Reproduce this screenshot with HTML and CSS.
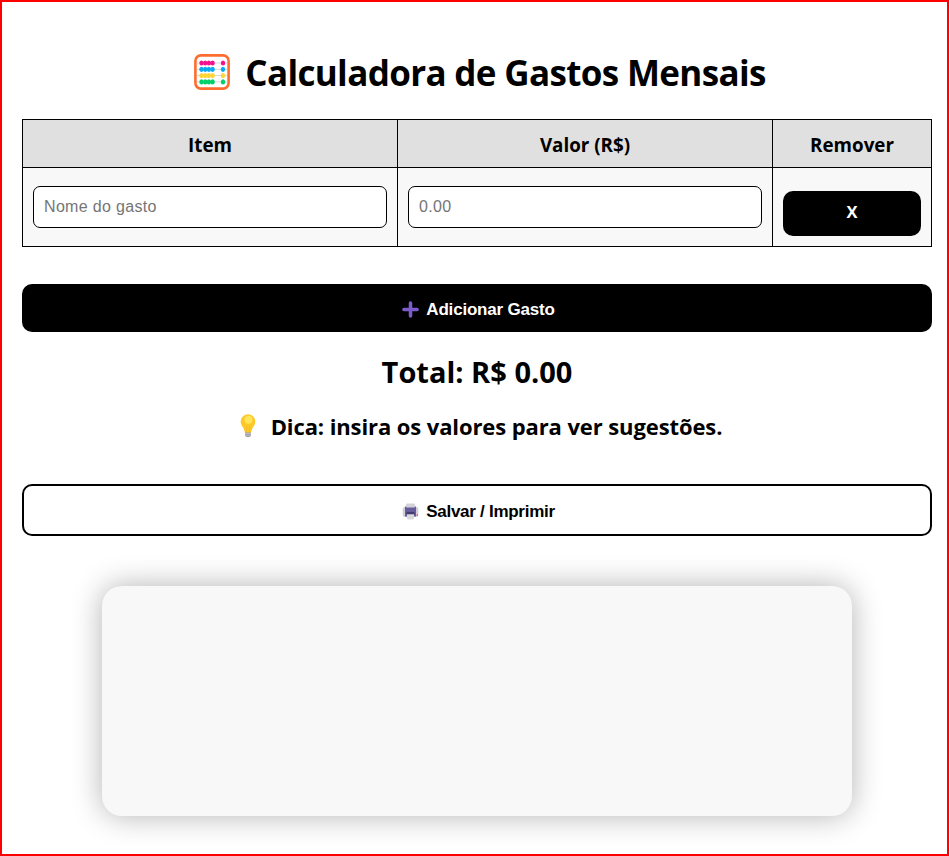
FILE: index.html
```html
<!DOCTYPE html>
<html lang="pt-BR">
<head>
<meta charset="UTF-8">
<title>Calculadora de Gastos Mensais</title>
<link rel="stylesheet" href="styles.css">
</head>
<body>
<main class="page">
  <h1 class="title">
    <svg class="abacus" viewBox="0 0 36 36" aria-hidden="true">
      <rect x="1.4" y="1.4" width="33.2" height="33.2" rx="5.5" fill="#fff" stroke="#ff6d2e" stroke-width="2.6"/>
      <path d="M3 9h30M3 15.3h30M3 21.6h30M3 27.9h30" stroke="#d5d5d5" stroke-width="1"/>
      <g fill="#f3128d"><ellipse cx="7.5" cy="9" rx="2.2" ry="2.6"/><ellipse cx="11.2" cy="9" rx="2.2" ry="2.6"/><ellipse cx="14.9" cy="9" rx="2.2" ry="2.6"/><ellipse cx="18.6" cy="9" rx="2.2" ry="2.6"/><ellipse cx="29" cy="9" rx="2.2" ry="2.6"/></g>
      <g fill="#08a8f4"><ellipse cx="7.5" cy="15.3" rx="2.2" ry="2.6"/><ellipse cx="11.2" cy="15.3" rx="2.2" ry="2.6"/><ellipse cx="14.9" cy="15.3" rx="2.2" ry="2.6"/><ellipse cx="18.6" cy="15.3" rx="2.2" ry="2.6"/><ellipse cx="29" cy="15.3" rx="2.2" ry="2.6"/></g>
      <g fill="#fdd535"><ellipse cx="7.5" cy="21.6" rx="2.2" ry="2.6"/><ellipse cx="11.2" cy="21.6" rx="2.2" ry="2.6"/><ellipse cx="14.9" cy="21.6" rx="2.2" ry="2.6"/><ellipse cx="18.6" cy="21.6" rx="2.2" ry="2.6"/><ellipse cx="29" cy="21.6" rx="2.2" ry="2.6"/></g>
      <g fill="#00cf6b"><ellipse cx="7.5" cy="27.9" rx="2.2" ry="2.6"/><ellipse cx="11.2" cy="27.9" rx="2.2" ry="2.6"/><ellipse cx="14.9" cy="27.9" rx="2.2" ry="2.6"/><ellipse cx="18.6" cy="27.9" rx="2.2" ry="2.6"/><ellipse cx="29" cy="27.9" rx="2.2" ry="2.6"/></g>
    </svg>
    <span class="title-text">Calculadora de Gastos Mensais</span>
  </h1>
  <table class="expenses">
    <thead>
      <tr><th class="col-field">Item</th><th class="col-field">Valor (R$)</th><th>Remover</th></tr>
    </thead>
    <tbody>
      <tr>
        <td><input class="field" type="text" placeholder="Nome do gasto"></td>
        <td><input class="field" type="text" placeholder="0.00"></td>
        <td><button class="remove">X</button></td>
      </tr>
    </tbody>
  </table>
  <button class="action add">
    <svg class="plus" viewBox="0 0 17 17" aria-hidden="true"><path d="M8.5 1.900v13.200M1.900 8.500h13.200" stroke="#7b5bcb" stroke-width="3.500" stroke-linecap="round"/></svg>
    <span>Adicionar Gasto</span>
  </button>
  <p class="total">Total: R$ 0.00</p>
  <p class="tip">
    <svg class="bulb" viewBox="0 0 16 24" aria-hidden="true">
      <path d="M5 18h6v3.4L9.6 23H6.4L5 21.4z" fill="#9c99a3"/>
      <path d="M5 19.5h6M5 21.3h6" stroke="#d0ced3" stroke-width=".7"/>
      <path d="M8 .3A7.3 7.3 0 0 0 .7 7.6c0 3.2 1.6 4.6 2.9 6.8.7 1.2.9 3.4 1.5 4h5.8c.6-.6.8-2.800 1.500-4 1.300-2.200 2.900-3.600 2.900-6.800A7.300 7.300 0 0 0 8 .3z" fill="#fcc927"/>
      <path d="M6.500 18V12M9.500 18V12" stroke="#f4b62c" stroke-width=".8"/>
      <circle cx="8.500" cy="5.700" r="4" fill="#ffe45c"/>
    </svg>
    <span>Dica: insira os valores para ver sugestões.</span>
  </p>
  <button class="action print">
    <svg class="printer" viewBox="0 0 17 17" aria-hidden="true">
      <rect x=".7" y="4" width="15.600" height="10" rx="2" fill="#d1cfd5"/>
      <rect x="4" y=".5" width="9" height="6" rx="1" fill="#d4d2d9"/>
      <path d="M3 3.500h1.200v1h8.600v-1H14V13.500H3z" fill="#655c9b"/>
      <path d="M4.500 9h8v3h-8z" fill="#433b6b"/>
      <path d="M5 11h7v4.500l-1 1H6l-1-1z" fill="#d9d7dd"/>
      <path d="M5 11.500h7" stroke="#aaa7b3" stroke-width=".8"/>
      <circle cx="15.300" cy="12" r=".8" fill="#ef2d69"/>
    </svg>
    <span>Salvar / Imprimir</span>
  </button>
  <section class="chart"></section>
</main>
</body>
</html>
```
FILE: styles.css
```css
* { box-sizing: border-box; }

body {
  margin: 0;
  background: #fff;
  color: #000;
  font-family: "Open Sans", "Noto Sans", sans-serif;
}

.page {
  height: 856px;
  border: 2px solid #f00;
  padding: 45px 15px 0 20px;
  display: flex;
  flex-direction: column;
}

.title, .total, .tip { margin: 0; font-weight: 700; white-space: nowrap; }

.title {
  width: 910px;
  height: 50px;
  padding-left: 6px;
  display: flex;
  align-items: center;
  justify-content: center;
  gap: 15px;
  font-size: 35px;
  line-height: 50px;
  letter-spacing: -0.65px;
}

.title-text { padding-top: 1px; }

.abacus { width: 36px; height: 36px; }

.expenses {
  width: 910px;
  margin-top: 22px;
  border-collapse: collapse;
  table-layout: fixed;
}

.expenses th, .expenses td { border: 1px solid #000; padding: 0 10px; }

.expenses th {
  height: 48px;
  padding-top: 3px;
  background: #e0e0e0;
  font-size: 18.8px;
  line-height: 26px;
}

.expenses .col-field { width: 375px; }

.expenses td { height: 79px; background: #f8f8f8; }

.field {
  display: block;
  width: 100%;
  height: 42px;
  padding: 0 10px 1px;
  border: 1px solid #000;
  border-radius: 7px;
  background: #fff;
  font: 16px "Liberation Sans", Arial, sans-serif;
  letter-spacing: 0.33px;
}

.field::placeholder { color: #757575; }

.remove {
  display: block;
  width: 100%;
  height: 45px;
  margin-top: 13px;
  padding: 0 0 4px;
  border: 0;
  border-radius: 10px;
  background: #000;
  color: #fff;
  font: 700 16.5px "Open Sans", sans-serif;
}

.action {
  width: 910px;
  flex-shrink: 0;
  display: flex;
  align-items: center;
  justify-content: center;
  gap: 7px;
  border-radius: 10px;
  font: 700 17px "Liberation Sans", Arial, sans-serif;
}

.action span { padding-top: 1px; }

.add {
  height: 48px;
  margin-top: 37px;
  padding: 3px 0 0 3px;
  border: 0;
  background: #000;
  color: #fff;
  letter-spacing: -0.2px;
}

.plus, .printer { width: 17px; height: 17px; }

.total {
  width: 910px;
  margin-top: 20px;
  font-size: 29px;
  line-height: 40px;
  text-align: center;
}

.tip {
  width: 910px;
  margin-top: 18px;
  padding-left: 8px;
  display: flex;
  align-items: center;
  justify-content: center;
  gap: 15px;
  font-size: 22px;
  line-height: 32px;
  letter-spacing: -0.1px;
}

.bulb { width: 16px; height: 24px; }

.print {
  height: 52px;
  margin-top: 42px;
  padding: 3px 0 0 3px;
  border: 2px solid #000;
  background: #fff;
  color: #000;
  letter-spacing: -0.27px;
}

.chart {
  width: 750px;
  height: 230px;
  margin: 50px 0 0 80px;
  border-radius: 20px;
  background: #f8f8f8;
  box-shadow: 0 0 30px rgba(0, 0, 0, 0.3);
}
```
